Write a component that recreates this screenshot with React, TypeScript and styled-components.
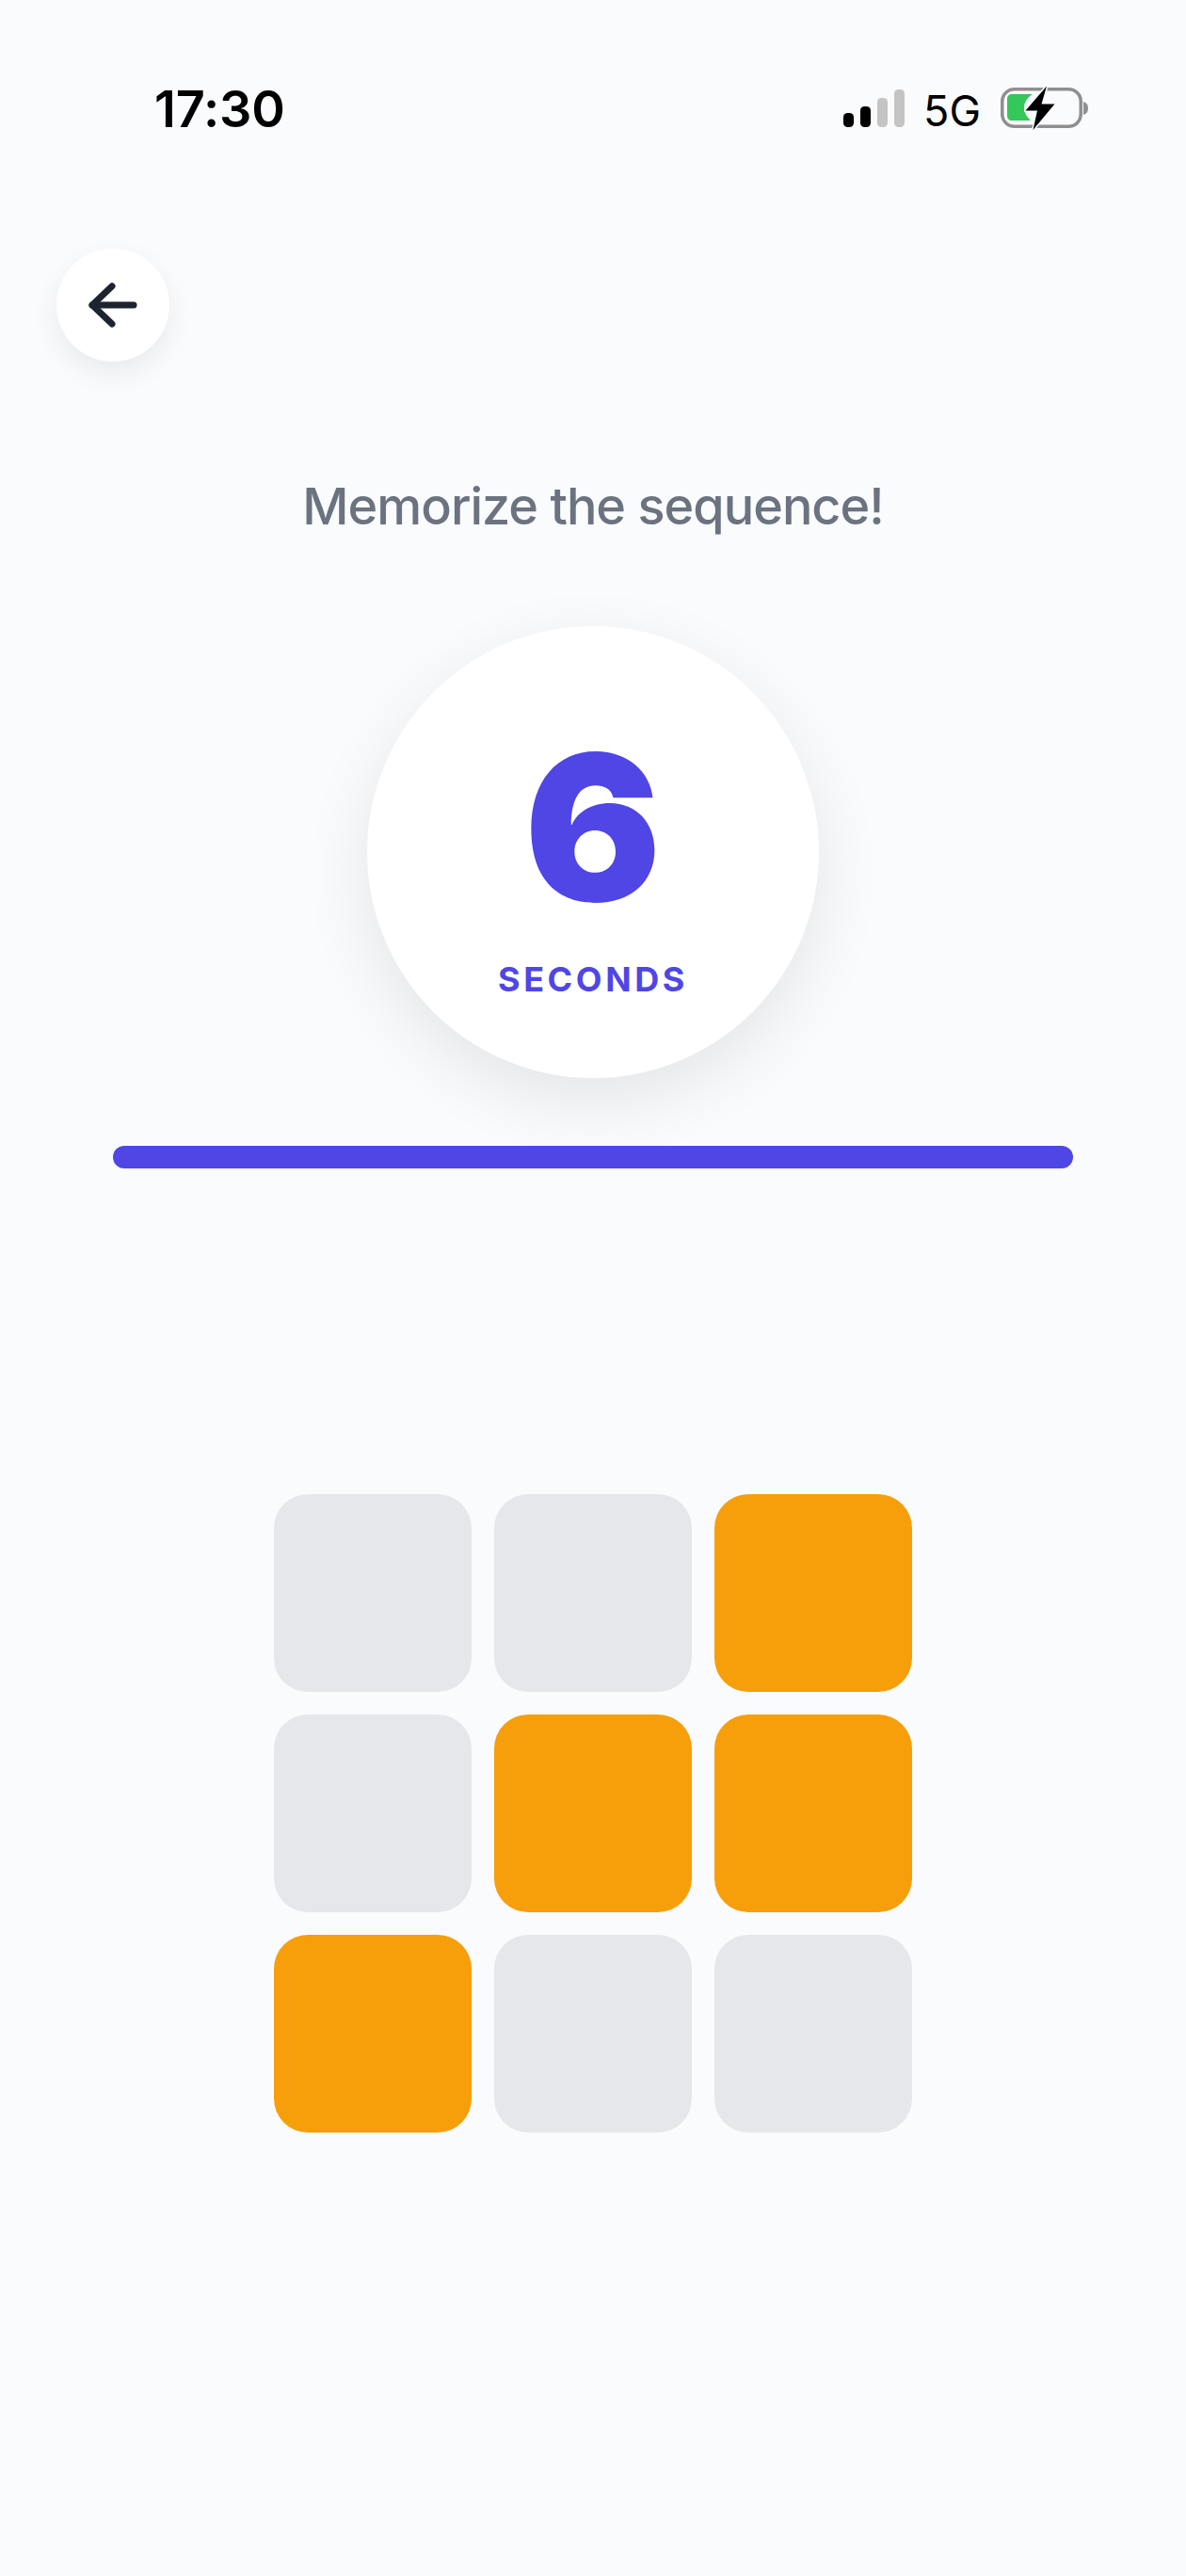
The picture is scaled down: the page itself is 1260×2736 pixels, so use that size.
import React from "react";
import styled, { createGlobalStyle } from "styled-components";

const Global = createGlobalStyle`
  html, body { margin: 0; padding: 0; background: #fafbfd; }
  * { box-sizing: border-box; }
`;

const Page = styled.div`
  width: 1260px;
  height: 2736px;
  background: #fafbfd;
  font-family: Inter, "Liberation Sans", sans-serif;
  display: flex;
  flex-direction: column;
  overflow: hidden;
`;

const StatusBar = styled.div`
  height: 264px;
  padding: 84px 102px 0 164px;
  display: flex;
  justify-content: space-between;
  align-items: flex-start;
  flex: none;
`;

const Time = styled.div`
  font-size: 54px;
  line-height: 64px;
  font-weight: 600;
  color: #000;
  letter-spacing: -0.1px;
`;

const StatusIcons = styled.div`
  display: flex;
  align-items: center;
  height: 64px;
`;

const SignalIcon = styled.svg`
  margin-top: -2px;
`;

const BatteryIcon = styled.svg`
  margin-top: -2px;
`;

const NetLabel = styled.span`
  font-size: 45px;
  line-height: 52px;
  font-weight: 400;
  color: #000;
  margin: 4px 20px 0 19px;
`;

const Content = styled.div`
  display: flex;
  flex-direction: column;
  flex: 1;
`;

const BackRow = styled.div`
  padding-left: 60px;
  height: 120px;
`;

const BackButton = styled.button`
  width: 120px;
  height: 120px;
  border-radius: 50%;
  border: 0;
  padding: 0;
  background: #fff;
  box-shadow: 0 12px 30px rgba(0, 0, 0, 0.07);
  display: flex;
  align-items: center;
  justify-content: center;
  color: #1e2330;
`;

const Prompt = styled.div`
  margin-top: 116px;
  text-align: center;
  font-size: 54px;
  line-height: 76px;
  font-weight: 500;
  letter-spacing: -1px;
  color: #6b7280;
`;

const TimerCircle = styled.div`
  margin: 89px auto 0;
  width: 480px;
  height: 480px;
  border-radius: 50%;
  background: #fff;
  box-shadow: 0 24px 72px rgba(0, 0, 0, 0.09);
  display: flex;
  flex-direction: column;
  align-items: center;
  color: #4f46e5;
`;

const Count = styled.div`
  margin-top: 106px;
  font-size: 216px;
  line-height: 216px;
  font-weight: 900;
`;

const Unit = styled.div`
  margin-top: 31px;
  font-size: 36px;
  line-height: 44px;
  font-weight: 700;
  letter-spacing: 3.6px;
`;

const Track = styled.div`
  margin: 72px 120px 0;
  height: 24px;
  border-radius: 12px;
  background: #4f46e5;
`;

const Grid = styled.div`
  margin: 346px auto 0;
  display: grid;
  grid-template-columns: repeat(3, 210px);
  grid-auto-rows: 210px;
  gap: 24px;
`;

const Cell = styled.div<{ $on?: boolean }>`
  border-radius: 36px;
  background: ${(p) => (p.$on ? "#f79e0b" : "#e5e7eb")};
`;

const pattern = [false, false, true, false, true, true, true, false, false];

const Signal = () => (
  <SignalIcon width="66" height="40" viewBox="0 0 66 40">
    <rect x="0" y="25" width="11" height="15" rx="4.5" fill="#000" />
    <rect x="18" y="18" width="11" height="22" rx="4.5" fill="#000" />
    <rect x="36" y="9" width="11" height="31" rx="4.5" fill="#c4c4c4" />
    <rect x="54" y="0" width="11" height="40" rx="4.5" fill="#c4c4c4" />
  </SignalIcon>
);

const Battery = () => (
  <BatteryIcon width="96" height="48" viewBox="0 0 96 48">
    <rect x="2.75" y="3.75" width="83.5" height="39.5" rx="13" fill="none" stroke="#8f8f8f" strokeWidth="3.5" />
    <path d="M89 17 C92.5 18 94 20.5 94 24 C94 27.5 92.5 30 89 31 Z" fill="#8f8f8f" />
    <path d="M13 9 H35 C29 13 26 18 26 23 C26 29 29 33 33 37 H13 C10 37 8 35 8 32 V14 C8 11 10 9 13 9 Z" fill="#34c759" />
    <path d="M50 0.5 L27.5 26.5 H40 L35.5 47 L58.5 19.5 H44.5 Z" fill="#000" stroke="#fafbfd" strokeWidth="3" strokeLinejoin="round" paintOrder="stroke" />
  </BatteryIcon>
);

const ArrowLeft = () => (
  <svg width="60" height="52" viewBox="0 0 60 52" fill="none" stroke="currentColor" strokeWidth="7" strokeLinecap="round" strokeLinejoin="round">
    <path d="M52 26 H8" />
    <path d="M29 6 L8 26 L29 46" />
  </svg>
);

export default function App() {
  return (
    <Page>
      <Global />
      <StatusBar>
        <Time>17:30</Time>
        <StatusIcons>
          <Signal />
          <NetLabel>5G</NetLabel>
          <Battery />
        </StatusIcons>
      </StatusBar>
      <Content>
        <BackRow>
          <BackButton aria-label="Back">
            <ArrowLeft />
          </BackButton>
        </BackRow>
        <Prompt>Memorize the sequence!</Prompt>
        <TimerCircle>
          <Count>6</Count>
          <Unit>SECONDS</Unit>
        </TimerCircle>
        <Track />
        <Grid>
          {pattern.map((on, i) => (
            <Cell key={i} $on={on} />
          ))}
        </Grid>
      </Content>
    </Page>
  );
}
